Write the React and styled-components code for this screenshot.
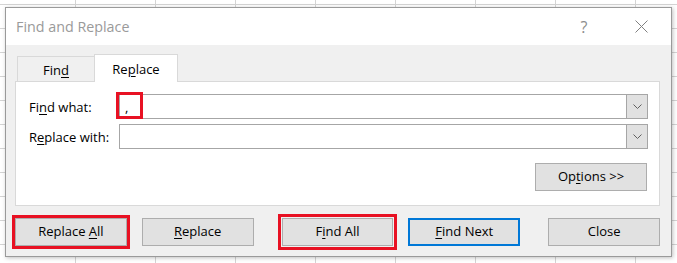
import styled, { createGlobalStyle, css } from "styled-components";

const GlobalStyle = createGlobalStyle`
  html, body {
    margin: 0;
    height: 100%;
  }
  body {
    font-family: "Segoe UI", "Open Sans", "Noto Sans", sans-serif;
    background-color: #fff;
    background-image:
      linear-gradient(to right, #d4d4d4 1px, transparent 1px),
      linear-gradient(to bottom, #d4d4d4 1px, transparent 1px);
    background-size: 80px 24px;
    background-position: 75px 4px;
    overflow: hidden;
  }
  #root {
    padding: 7px 0 0 5px;
  }
`;

const Dialog = styled.div`
  box-sizing: border-box;
  width: 667px;
  height: 250px;
  border: 1px solid #9a9a9a;
  box-shadow: 1px 1px 4px rgba(0, 0, 0, 0.25);
  background: #f0f0f0;
  display: flex;
  flex-direction: column;
`;

const TitleBar = styled.div`
  height: 37px;
  background: #fff;
  display: flex;
  align-items: center;
  padding: 0 23px 0 10px;
  font-size: 14.3px;
  color: #9a9a9a;
`;

const Title = styled.div`
  flex: 1;
  padding-bottom: 1px;
`;

const TitleIcon = styled.div`
  width: 14px;
  display: flex;
  justify-content: center;
  color: #8c8c8c;
  font-size: 16px;
  margin-left: ${(p) => p.gap || 0}px;
`;

const Body = styled.div`
  flex: 1;
  padding: 9px 11px 0 9px;
`;

const TabStrip = styled.div`
  display: flex;
  align-items: flex-end;
  height: 27px;
  padding-left: 2px;
`;

const Tab = styled.div`
  box-sizing: border-box;
  display: flex;
  align-items: center;
  justify-content: center;
  font-size: 13px;
  color: #000;
  border: 1px solid #d9d9d9;
  border-bottom: none;
  ${(p) =>
    p.active
      ? css`
          width: 84px;
          height: 28px;
          background: #fff;
          position: relative;
          z-index: 1;
          margin-bottom: -1px;
        `
      : css`
          width: 77px;
          height: 25px;
          background: #f0f0f0;
          border-right: none;
          padding-top: 2px;
        `}
`;

const Panel = styled.div`
  box-sizing: border-box;
  height: 125px;
  background: #fff;
  border: 1px solid #d9d9d9;
  padding: 12px 11px 0 13px;
  display: flex;
  flex-direction: column;
  gap: 5px;
`;

const FieldRow = styled.div`
  display: flex;
  align-items: center;
  font-size: 13px;
  color: #000;
`;

const Label = styled.div`
  width: 90px;
`;

const Combo = styled.div`
  position: relative;
  box-sizing: border-box;
  flex: 1;
  height: 25px;
  border: 1px solid #a6a6a6;
  display: flex;
  align-items: center;
  background: #fff;
`;

const ComboText = styled.div`
  flex: 1;
  padding-left: 5px;
  font-size: 13px;
`;

const ComboArrow = styled.div`
  width: 20px;
  height: 100%;
  background: #e1e1e1;
  border-left: 1px solid #a6a6a6;
  display: flex;
  align-items: center;
  justify-content: center;
`;

const Highlight = styled.div`
  position: absolute;
  left: -4px;
  top: -3px;
  width: 27px;
  height: 27px;
  box-sizing: border-box;
  border: 3px solid #e81123;
`;

const OptionsRow = styled.div`
  display: flex;
  justify-content: flex-end;
  padding: 9px 1px 0 0;
`;

const Button = styled.button`
  box-sizing: border-box;
  width: 112px;
  height: 28px;
  background: #e1e1e1;
  border: 1px solid #adadad;
  font-family: inherit;
  font-size: 13px;
  color: #000;
  padding: 0 0 2px;
  margin-left: ${(p) => p.gap || 0}px;
  ${(p) =>
    p.primary &&
    css`
      border: 2px solid #0078d7;
    `}
  ${(p) =>
    p.marked &&
    css`
      outline: 3px solid #e81123;
      outline-offset: ${p.marked - 1}px;
    `}
`;

const ButtonRow = styled.div`
  display: flex;
  padding-top: 12px;
`;

const Key = styled.span`
  text-decoration: underline;
  text-underline-offset: 2px;
`;

function Chevron() {
  return (
    <svg width="9" height="6" viewBox="0 0 9 6">
      <polyline points="0.5,0.5 4.5,4.5 8.5,0.5" fill="none" stroke="#606060" strokeWidth="1" />
    </svg>
  );
}

function CloseGlyph() {
  return (
    <svg width="13" height="13" viewBox="0 0 13 13">
      <path d="M0.5 0.5 L12.5 12.5 M12.5 0.5 L0.5 12.5" stroke="#808080" strokeWidth="1" />
    </svg>
  );
}

export default function App() {
  return (
    <>
      <GlobalStyle />
      <Dialog>
        <TitleBar>
          <Title>Find and Replace</Title>
          <TitleIcon>?</TitleIcon>
          <TitleIcon gap={43}>
            <CloseGlyph />
          </TitleIcon>
        </TitleBar>
        <Body>
          <TabStrip>
            <Tab>
              Fin<Key>d</Key>
            </Tab>
            <Tab active>
              Re<Key>p</Key>lace
            </Tab>
          </TabStrip>
          <Panel>
            <FieldRow>
              <Label>
                Fi<Key>n</Key>d what:
              </Label>
              <Combo>
                <Highlight />
                <ComboText>,</ComboText>
                <ComboArrow>
                  <Chevron />
                </ComboArrow>
              </Combo>
            </FieldRow>
            <FieldRow>
              <Label>
                R<Key>e</Key>place with:
              </Label>
              <Combo>
                <ComboText />
                <ComboArrow>
                  <Chevron />
                </ComboArrow>
              </Combo>
            </FieldRow>
            <OptionsRow>
              <Button>
                Op<Key>t</Key>ions &gt;&gt;
              </Button>
            </OptionsRow>
          </Panel>
          <ButtonRow>
            <Button marked={1}>
              Replace <Key>A</Key>ll
            </Button>
            <Button gap={15}>
              <Key>R</Key>eplace
            </Button>
            <Button gap={28} marked={2}>
              F<Key>i</Key>nd All
            </Button>
            <Button gap={15} primary>
              <Key>F</Key>ind Next
            </Button>
            <Button gap={28}>Close</Button>
          </ButtonRow>
        </Body>
      </Dialog>
    </>
  );
}
